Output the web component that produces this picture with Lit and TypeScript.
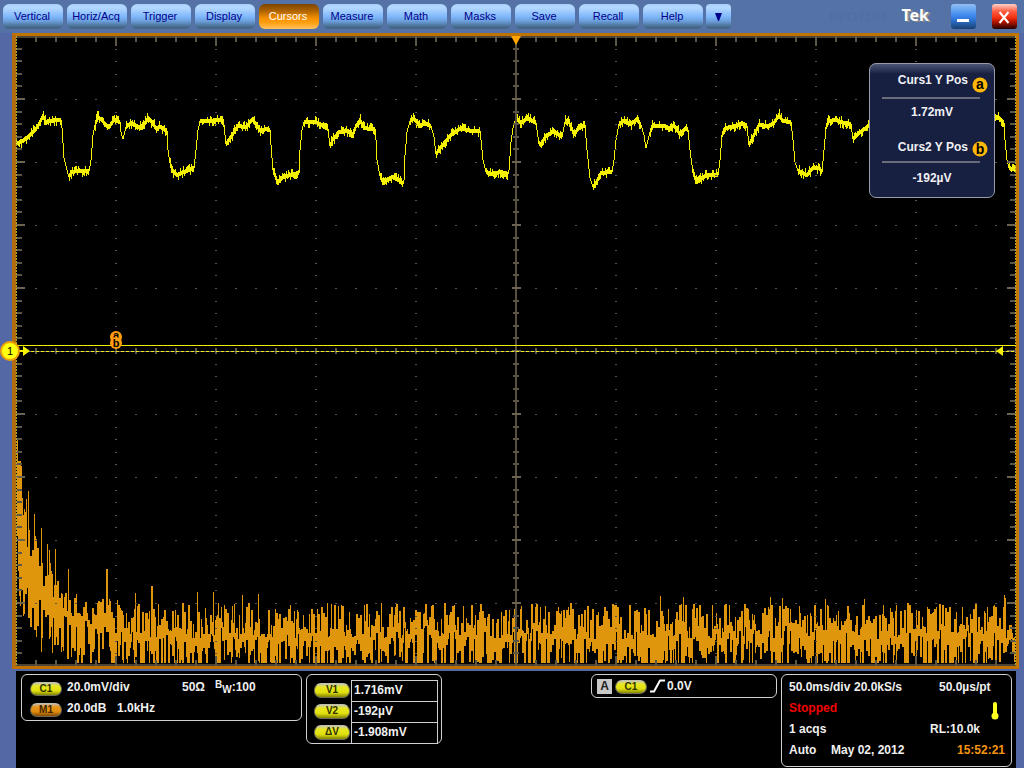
import { LitElement, html, css, svg } from "lit";
import { customElement, state } from "lit/decorators.js";
import { classMap } from "lit/directives/class-map.js";

const PLOT_W = 1000;
const PLOT_H = 630;

const MENUS = [
  "Vertical", "Horiz/Acq", "Trigger", "Display", "Cursors", "Measure",
  "Math", "Masks", "Save", "Recall", "Help",
];

/* Channel 1 samples, in plot units: time, level. */
const CH1: number[][] = [
  [0, 107], [4, 106], [11, 101], [18, 94], [22, 88], [26, 80], [29, 87], [31, 85], [44, 84], [45, 92], [47, 122],
  [50, 134], [52, 141], [55, 136], [60, 135], [72, 135], [74, 124], [76, 99], [78, 89], [81, 81], [85, 84], [89, 89],
  [92, 91], [97, 84], [103, 86], [104, 96], [106, 103], [109, 91], [114, 87], [119, 90], [125, 92], [127, 89],
  [131, 82], [135, 86], [139, 92], [144, 91], [150, 95], [151, 114], [153, 127], [156, 135], [160, 139], [164, 137],
  [172, 134], [177, 132], [179, 114], [181, 94], [183, 85], [189, 85], [204, 84], [207, 89], [209, 108], [214, 101],
  [221, 90], [229, 91], [236, 83], [240, 90], [244, 95], [249, 93], [253, 94], [254, 109], [256, 134], [259, 142],
  [261, 147], [264, 142], [269, 140], [282, 137], [283, 114], [285, 94], [287, 86], [290, 86], [299, 86], [306, 90],
  [311, 93], [313, 110], [316, 103], [322, 96], [331, 95], [335, 100], [339, 90], [343, 84], [347, 92], [354, 93],
  [358, 93], [359, 104], [360, 124], [363, 140], [367, 147], [371, 143], [376, 141], [382, 144], [386, 148],
  [387, 144], [388, 119], [390, 96], [393, 85], [397, 82], [402, 90], [408, 87], [414, 90], [417, 101], [419, 118],
  [424, 111], [434, 99], [444, 92], [454, 95], [463, 95], [464, 104], [466, 124], [469, 136], [474, 138], [484, 136],
  [491, 138], [492, 134], [494, 106], [496, 92], [499, 82], [504, 87], [511, 82], [519, 87], [522, 108], [524, 108],
  [529, 100], [537, 95], [545, 101], [548, 86], [551, 84], [557, 98], [561, 93], [568, 89], [570, 114], [573, 142],
  [576, 151], [580, 145], [584, 137], [595, 136], [597, 124], [599, 104], [602, 88], [606, 85], [614, 88], [620, 83],
  [624, 89], [627, 99], [629, 112], [633, 96], [636, 90], [647, 90], [654, 93], [657, 89], [663, 98], [669, 92],
  [671, 94], [673, 114], [676, 137], [680, 146], [684, 143], [690, 139], [701, 139], [703, 124], [705, 99],
  [709, 92], [719, 90], [725, 87], [730, 90], [732, 109], [736, 101], [742, 89], [752, 90], [757, 87], [762, 79],
  [766, 85], [774, 86], [776, 104], [778, 126], [781, 135], [790, 139], [796, 132], [802, 132], [805, 136],
  [807, 114], [809, 91], [812, 85], [819, 84], [827, 87], [834, 88], [836, 103], [842, 97], [853, 89], [880, 88],
  [882, 120], [888, 140], [910, 136], [914, 90], [940, 86], [945, 104], [960, 90], [978, 80], [982, 82], [987, 87],
  [988, 104], [990, 124], [992, 132], [1000, 134],
];

/* Tall harmonics of the spectrum: column, top. */
const SPIKES: Record<number, number> = {
  10: 463, 12: 455, 18: 478, 25: 492, 31: 508, 33: 514, 39: 513, 52: 533, 47: 572,
  90: 533, 91: 533, 101: 564, 119: 557, 135: 550, 136: 550, 181: 556, 197: 556, 226: 559, 242: 558,
  644: 560, 667: 561, 754: 561, 766: 562, 809: 563, 848: 563, 988: 559, 989: 562,
};

function noise(seed: number): () => number {
  let s = seed;
  return () => {
    s = (Math.imul(s, 1664525) + 1013904223) >>> 0;
    return s / 4294967296;
  };
}

function channelPath(): string {
  const rnd = noise(7);
  let d = "";
  let k = 0;
  let prev = CH1[0][1];
  for (let x = 0; x < PLOT_W; x++) {
    while (k < CH1.length - 2 && CH1[k + 1][0] <= x) k++;
    const [x0, y0] = CH1[k];
    const [x1, y1] = CH1[k + 1];
    const y = y0 + ((y1 - y0) * (x - x0)) / (x1 - x0);
    const flat = Math.abs(y - prev) < 3;
    const half = flat ? 2 : 0;
    const spur = rnd();
    const up = flat && spur < 0.35 ? 1 + rnd() * 3 : 0;
    const down = flat && spur > 0.65 ? 1 + rnd() * 3 : 0;
    const top = Math.round(Math.min(y, prev) - half - up);
    const bottom = Math.round(Math.max(y, prev) + half + down);
    d += `M${x + 0.5} ${top}V${Math.max(bottom, top + 2)}`;
    prev = y;
  }
  return d;
}

function spectrumPath(): string {
  const rnd = noise(2012);
  const floor = PLOT_H - 3;
  let d = "M1.5 404V500M2.5 425V535M3.5 425V560M4.5 425V570M5.5 430V550";
  let lastTop = 480;
  let lastBottom = 560;
  let held = 0;
  let top = 0;
  let bottom = 0;
  for (let x = 5; x < PLOT_W - 1; x++) {
    if (held <= 0) {
      const lift = 106 * Math.exp(-(x - 5) / 30);
      const high = rnd();
      top = 567 + high * 36 - lift;
      const deep = rnd();
      bottom = deep < 0.36
        ? floor + 6 - lift * (0.3 + rnd() * 0.4)
        : Math.max(top + 14, 590 + rnd() * 37 - lift * 0.5);
      held = rnd() < 0.5 ? 2 : 1;
    }
    held--;
    let t = Math.min(top, lastBottom - 6);
    let b = Math.max(bottom, lastTop + 8);
    if (SPIKES[x] !== undefined) t = SPIKES[x];
    b = Math.min(b, floor);
    d += `M${x + 0.5} ${Math.round(t)}V${Math.round(b)}`;
    lastTop = top;
    lastBottom = bottom;
  }
  return d;
}

function gridPaths() {
  let edge = "";
  let major = "";
  let dots = "";
  for (let i = 1; i < 50; i++) {
    const x = i * 20;
    const long = i % 5 === 0;
    edge += `M${x} 0V${long ? 10 : 6}M${x} ${PLOT_H}V${PLOT_H - (long ? 10 : 6)}`;
    edge += `M${x} 312V318`;
  }
  for (let j = 1; j < 50; j++) {
    const y = Math.round(j * 12.6);
    const seg = j % 5 === 0 ? 9 : 6;
    const target = `M0 ${y}H${seg}M${PLOT_W} ${y}H${PLOT_W - seg}M${500 - seg / 2} ${y}H${500 + seg / 2}`;
    if (j % 5 === 0) major += target;
    else edge += target;
    for (let i = 1; i < 10; i++) {
      if (i !== 5) dots += `M${i * 100 - 1} ${y + 0.5}h2`;
    }
  }
  for (let j = 1; j < 10; j++) {
    if (j === 5) continue;
    for (let i = 1; i < 50; i++) dots += `M${i * 20 - 1} ${j * 63 + 0.5}h2`;
  }
  return { edge, major, dots };
}

@customElement("scope-plot")
class ScopePlot extends LitElement {
  static styles = css`
    :host {
      display: block;
      position: relative;
      min-height: 0;
      border-style: solid;
      border-width: 3px 3px 3px 4px;
      border-color: #c07400 #c87800 #c07000 #b46c10;
      background: #000;
    }
    .traces {
      display: block;
      width: 100%;
      height: 100%;
    }
    .trigger {
      position: absolute;
      left: 50%;
      top: 0;
      margin-left: -5px;
      width: 10px;
      height: 9px;
    }
    .channel {
      position: absolute;
      left: -17px;
      top: 50%;
      margin-top: -10px;
      width: 32px;
      height: 20px;
    }
    .level {
      position: absolute;
      right: 12px;
      top: 50%;
      margin-top: -5px;
      width: 8px;
      height: 10px;
    }
    .cursors {
      position: absolute;
      left: 10%;
      top: 50%;
      margin: -21px 0 0 -7px;
      width: 14px;
      height: 20px;
    }
    .glyph {
      font: 11px "Liberation Sans", Arial, sans-serif;
      text-anchor: middle;
    }
    .glyph.bold {
      font-weight: bold;
    }
  `;

  render() {
    const g = gridPaths();
    return html`
      <svg class="traces" viewBox="0 0 ${PLOT_W} ${PLOT_H}" preserveAspectRatio="none" shape-rendering="crispEdges" role="img" aria-label="Waveform display">
        <path d=${channelPath()} stroke="#f4f000" fill="none" />
        <path d=${spectrumPath()} stroke="#e0960c" fill="none" />
        <path d="M500 0V630" stroke="#58503e" stroke-width="2" />
        <path d="M0 1H1000M0 629H1000" stroke="#4c4434" stroke-width="2" />
        <path d=${g.dots} stroke="#58564a" stroke-width="1" fill="none" />
        <path d=${g.edge} stroke="#5c5646" stroke-width="2" fill="none" />
        <path d=${g.major} stroke="#6c6450" stroke-width="2" fill="none" />
        <path d="M.5 0V630M999.5 0V630" stroke="#b0a830" stroke-dasharray="2 1" />
        <path d="M0 309.5H1000" stroke="#f0ec00" />
        <path d="M0 315.5H1000" stroke="#707060" />
        <path d="M0 315.5H1000" stroke="#f0ec20" stroke-dasharray="3 2" />
      </svg>
      <svg class="trigger" viewBox="0 0 10 9" aria-hidden="true"><path d="M0 0H10L5 9Z" fill="#ffa400" /></svg>
      <svg class="level" viewBox="0 0 8 10" aria-hidden="true"><path d="M0 5L7 0V10Z" fill="#f4f000" /></svg>
      <svg class="channel" viewBox="0 0 32 20">
        <path d="M19 10h8" stroke="#f8f400" stroke-width="2" />
        <path d="M24 5L31 10L24 15Z" fill="#f8f400" />
        <circle cx="11" cy="10" r="9" fill="#ffff10" stroke="#f0a000" stroke-width="2" />
        <text class="glyph" x="11" y="14">1</text>
      </svg>
      <svg class="cursors" viewBox="0 0 14 20">
        <circle cx="7" cy="7" r="6" fill="#ff9c10" />
        <text class="glyph bold" x="7" y="9">a</text>
        <circle cx="7" cy="13" r="6" fill="#ff9c10" />
        <text class="glyph bold" x="7" y="17">b</text>
      </svg>
      <slot></slot>
    `;
  }
}

@customElement("cursor-readout")
class CursorReadout extends LitElement {
  static styles = css`
    :host {
      position: absolute;
      top: 27px;
      right: 21px;
      box-sizing: border-box;
      width: 126px;
      padding: 5px 12px 8px;
      border: 1px solid #9a9ca8;
      border-radius: 7px;
      background: linear-gradient(#4c5674 0, #182042 10px);
      color: #f0f0f4;
      font: bold 12px/22px "Liberation Sans", Arial, sans-serif;
    }
    .list {
      margin: 0;
    }
    .name {
      display: flex;
      justify-content: flex-end;
      gap: 4px;
      height: 28px;
      margin-right: -6px;
    }
    .rule {
      height: 2px;
      margin-right: 2px;
      background: #6a6c7c;
    }
    .value {
      margin: 0;
      padding: 2px 0 7px;
      text-align: center;
    }
    .second {
      margin-top: 6px;
    }
    .second .name {
      height: 25px;
    }
    .name svg {
      width: 16px;
      height: 16px;
      margin-top: 8px;
    }
    .second svg {
      margin-top: 5px;
    }
    .letter {
      font: bold 14px "Liberation Sans", Arial, sans-serif;
      text-anchor: middle;
    }
    .last {
      padding: 4px 0 0;
    }
  `;

  private badge(letter: string) {
    return html`<svg viewBox="0 0 16 16">${svg`<circle cx="8" cy="8" r="7.5" fill="#ffb808"/><text class="letter" x="8" y=${letter === "a" ? 12 : 13}>${letter}</text>`}</svg>`;
  }

  render() {
    return html`
      <dl class="list">
        <dt><div class="name">Curs1 Y Pos ${this.badge("a")}</div><div class="rule"></div></dt>
        <dd class="value">1.72mV</dd>
        <dt class="second"><div class="name">Curs2 Y Pos ${this.badge("b")}</div><div class="rule"></div></dt>
        <dd class="value last">-192µV</dd>
      </dl>
    `;
  }
}

@customElement("app-root")
class AppRoot extends LitElement {
  static styles = css`
    :host {
      display: grid;
      grid-template-rows: 33px minmax(300px, 1fr) auto;
      box-sizing: border-box;
      min-height: 100vh;
      background: #5468a6;
      color: #f0f0f0;
      font: bold 12px/21px "Liberation Sans", Arial, sans-serif;
    }
    .bar {
      display: flex;
      align-items: center;
      gap: 3px;
      padding: 0 7px 0 3px;
      background: #5472a6;
    }
    .menus {
      display: flex;
      gap: 4px;
    }
    .button {
      box-sizing: border-box;
      width: 60px;
      height: 25px;
      padding: 0 2px 0 0;
      border: 0;
      border-radius: 6px;
      background: linear-gradient(#a8d0fc 0, #b4d8ff 15%, #80b8fc 50%, #6ca0dc 68%, #40607c 96%, #4c6c94 100%);
      color: #00008c;
      font: 11px/25px "Liberation Sans", Arial, sans-serif;
      white-space: nowrap;
    }
    .button.active {
      background: linear-gradient(#7c4400 0, #a86000 25%, #f08c00 55%, #ffa010 75%, #ffc060 100%);
      color: #fff;
    }
    .button.more {
      width: 25px;
      padding: 0;
      border-radius: 4px;
    }
    .more svg {
      display: block;
      margin: 1px auto 0;
      width: 7px;
      height: 8px;
    }
    .model {
      margin-left: auto;
      color: #516ea2;
      font: 13px/22px "Liberation Sans", Arial, sans-serif;
    }
    .brand {
      margin: 0 19px 4px 12px;
      color: #fff;
      font: bold 16px/22px "Noto Sans", "Liberation Sans", sans-serif;
      text-shadow: 2px 1px 0 #8c8c8c;
    }
    .system {
      width: 25px;
      height: 25px;
      padding: 0;
      border: 0;
      border-radius: 3px;
      background: linear-gradient(#90c0f4 0, #4890f0 40%, #3078dc 60%, #184070 100%);
    }
    .system svg {
      display: block;
      width: 25px;
      height: 25px;
    }
    .close {
      margin-left: 13px;
      background: linear-gradient(#ffd0c8 0, #ff5c40 30%, #f03010 55%, #b01400 72%, #200000 100%);
    }
    .plot {
      margin: 0 5px 0 12px;
    }
    .footer {
      display: flex;
      align-items: flex-start;
      gap: 4px;
      box-sizing: border-box;
      min-height: 97px;
      margin: 2px 8px 0 16px;
      padding: 3px 4px 1px 5px;
      background: #000;
    }
    .box {
      box-sizing: border-box;
      border: 1px solid #d0d0d0;
      border-radius: 6px;
      white-space: nowrap;
    }
    .vertical {
      flex: 0 1 281px;
      padding: 2px 8px 1px;
    }
    .row {
      display: flex;
      align-items: center;
      height: 21px;
    }
    .scale {
      width: 115px;
      margin-left: 5px;
    }
    .ohms {
      width: 33px;
    }
    .gain {
      width: 50px;
      margin-left: 5px;
    }
    .limit {
      display: flex;
      height: 21px;
    }
    .up {
      font-size: 10px;
      line-height: 16px;
    }
    .down {
      font-size: 10px;
      line-height: 26px;
    }
    .pill {
      display: block;
      box-sizing: border-box;
      width: 32px;
      height: 14px;
      margin-top: 2px;
      border: 1px solid #6c6c58;
      border-top-color: #c0c0b0;
      border-radius: 7px;
      background: linear-gradient(#c8c8b0 0, #e8e820 25%, #e0e010 65%, #848400 100%);
      color: #303000;
      font: bold 10px/12px "Liberation Sans", Arial, sans-serif;
      text-align: center;
    }
    .pill.math {
      background: linear-gradient(#c8b8a0 0, #e89418 25%, #dc8c10 65%, #804800 100%);
      color: #402400;
    }
    .pill.wide {
      width: 36px;
      height: 15px;
      margin: 0 1px 2px 0;
    }
    .measure {
      height: 70px;
      padding: 5px 3px 0 7px;
    }
    .table {
      border-collapse: collapse;
    }
    .table th {
      padding: 0;
    }
    .table td {
      box-sizing: border-box;
      width: 86px;
      height: 21px;
      padding: 0 2px 1px;
      border: 1px solid #d0d0d0;
      line-height: 17px;
    }
    .table tr:last-child td {
      border-bottom: 0;
    }
    .trig {
      flex: 0 1 186px;
      display: flex;
      align-items: center;
      height: 24px;
      margin-left: auto;
      padding: 0 5px;
    }
    .source {
      width: 15px;
      margin-right: 3px;
      background: #c8c8c8;
      color: #202020;
      line-height: 15px;
      text-align: center;
    }
    .slope {
      width: 15px;
      height: 14px;
      margin: 0 2px 0 3px;
    }
    .horiz {
      flex: 0 1 231px;
      height: 93px;
      padding: 2px 6px 0 7px;
    }
    .main {
      width: 65px;
    }
    .rate {
      width: 85px;
    }
    .stopped {
      color: #f40000;
    }
    .spread {
      justify-content: space-between;
    }
    .heat {
      width: 8px;
      height: 18px;
      margin: 4px 6px 0 0;
    }
    .record {
      padding-right: 25px;
    }
    .mode {
      width: 42px;
    }
    .clock {
      margin-left: auto;
      color: #f49410;
    }
  `;

  @state() private selected = "Cursors";

  render() {
    return html`
      <header class="bar">
        <nav class="menus">
          ${MENUS.map((name) => html`<button
            class=${classMap({ button: true, active: name === this.selected })}
            @click=${() => (this.selected = name)}>${name}</button>`)}
        </nav>
        <button class="button more" aria-label="More menus"><svg viewBox="0 0 7 8"><path d="M0 0H7L4 8H3Z" fill="#00008c" /></svg></button>
        <span class="model">DPO7104</span>
        <span class="brand">Tek</span>
        <button class="system" aria-label="Minimize"><svg viewBox="0 0 25 25"><path d="M6 16.5H18" stroke="#fff" stroke-width="3" /></svg></button>
        <button class="system close" aria-label="Close"><svg viewBox="0 0 25 25"><path d="M7.5 8L16.5 19M16.5 8L7.5 19" stroke="#fff" stroke-width="2" /></svg></button>
      </header>
      <scope-plot class="plot"><cursor-readout></cursor-readout></scope-plot>
      <footer class="footer">
        <section class="box vertical">
          <div class="row"><span class="pill">C1</span><span class="scale">20.0mV/div</span><span class="ohms">50Ω</span><span class="limit"><span class="up">B</span><span class="down">W</span>:100</span></div>
          <div class="row"><span class="pill math">M1</span><span class="gain">20.0dB</span><span>1.0kHz</span></div>
        </section>
        <section class="box measure">
          <table class="table">
            <tr><th scope="row"><span class="pill wide">V1</span></th><td>1.716mV</td></tr>
            <tr><th scope="row"><span class="pill wide">V2</span></th><td>-192µV</td></tr>
            <tr><th scope="row"><span class="pill wide">ΔV</span></th><td>-1.908mV</td></tr>
          </table>
        </section>
        <section class="box trig">
          <span class="source">A</span><span class="pill">C1</span>
          <svg class="slope" viewBox="0 0 15 14" aria-label="Rising edge"><path d="M0 12.5H4L10 1.5H15" fill="none" stroke="#fff" stroke-width="2" stroke-linejoin="round" /></svg>
          <span>0.0V</span>
        </section>
        <section class="box horiz">
          <div class="row"><span class="main">50.0ms/div</span><span class="rate">20.0kS/s</span><span>50.0µs/pt</span></div>
          <div class="row spread"><span class="stopped">Stopped</span><svg class="heat" viewBox="0 0 8 18" aria-hidden="true"><path d="M4 2V14" stroke="#ffff20" stroke-width="4" stroke-linecap="round" /><circle cx="4" cy="14" r="3.5" fill="#ffff20" /></svg></div>
          <div class="row spread"><span>1 acqs</span><span class="record">RL:10.0k</span></div>
          <div class="row"><span class="mode">Auto</span><span>May 02, 2012</span><span class="clock">15:52:21</span></div>
        </section>
      </footer>
    `;
  }
}
